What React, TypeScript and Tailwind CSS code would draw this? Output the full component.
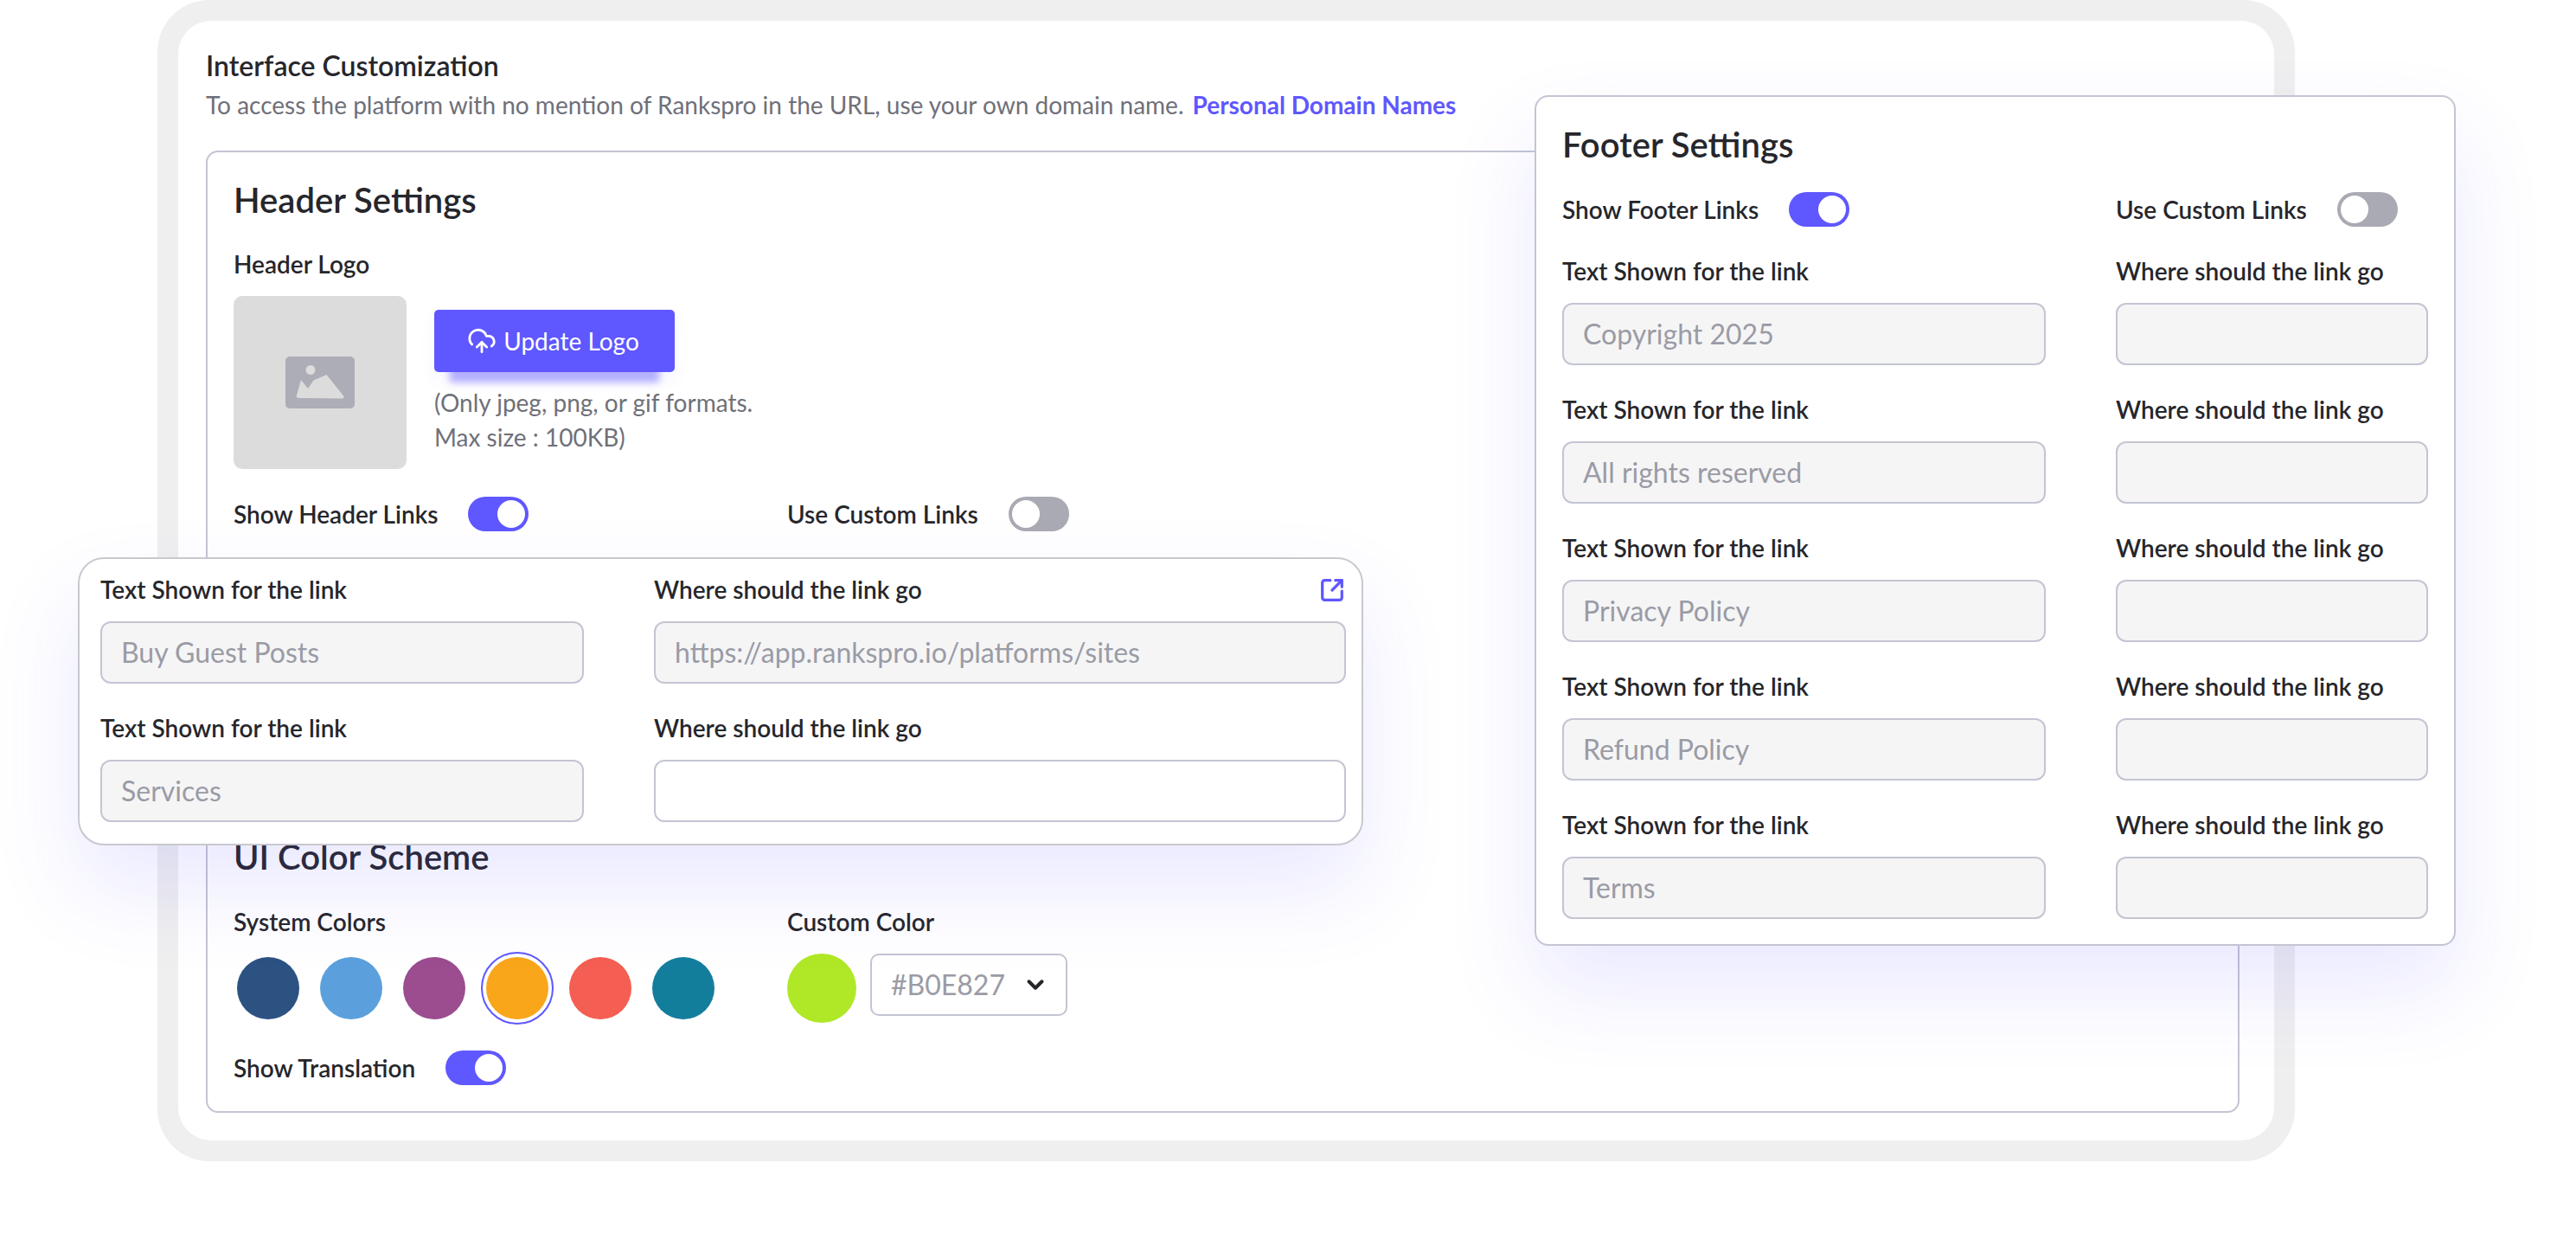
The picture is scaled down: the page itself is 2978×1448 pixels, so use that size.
import { CloudUpload, ChevronDown } from "lucide-react";

function Toggle({ on = true }: { on?: boolean }) {
  return (
    <div className={`flex h-[40px] w-[70px] shrink-0 items-center rounded-full p-[4px] ${on ? "justify-end bg-[#5f57ff]" : "justify-start bg-[#a9aab3]"}`}>
      <div className="h-[32px] w-[32px] rounded-full bg-white" />
    </div>
  );
}

function Label({ children }: { children: React.ReactNode }) {
  return <div className="h-[36px] whitespace-nowrap text-[28px] leading-[33px] font-semibold text-[#26262b]">{children}</div>;
}

function ToggleRow({ label, on }: { label: string; on?: boolean }) {
  return (
    <div className="flex h-[40px] items-center gap-[35px]">
      <div className="pt-[4px]">
        <Label>{label}</Label>
      </div>
      <Toggle on={on} />
    </div>
  );
}

function Field({ value = "", white = false }: { value?: string; white?: boolean }) {
  return (
    <div className={`flex h-[72px] items-center rounded-[12px] border-2 border-[#c3c5d3] px-[22px] text-[32px] text-[#9a9ba5] ${white ? "bg-white" : "bg-[#f5f5f6]"}`}>
      {value}
    </div>
  );
}

function LinkField({ label, value, white, extra }: { label: string; value?: string; white?: boolean; extra?: React.ReactNode }) {
  return (
    <div className="relative flex flex-col gap-[17px]">
      <Label>{label}</Label>
      <Field value={value} white={white} />
      {extra}
    </div>
  );
}

function ExternalIcon() {
  return (
    <svg className="absolute right-[2px] top-[3px]" width="28" height="28" viewBox="0 0 26 26" fill="none" stroke="#5f57ff" strokeWidth="3" strokeLinecap="round" strokeLinejoin="round">
      <path d="M11 2.5H5A2.5 2.5 0 0 0 2.5 5v16A2.5 2.5 0 0 0 5 23.5h16a2.5 2.5 0 0 0 2.5-2.5v-7" />
      <path d="M13 13 23.5 2.5" />
      <path d="M16.5 2.5h7v7" />
    </svg>
  );
}

function ImageIcon() {
  return (
    <svg width="80" height="60" viewBox="0 0 80 60">
      <rect width="80" height="60" rx="5" fill="#acadb6" />
      <circle cx="29" cy="15.5" r="5.5" fill="#dcdcdc" />
      <path d="M15 48a2.5 2.5 0 0 1-2-3.6L18 27l8 10 6.5-9.5 15-6.5 20 25a2 2 0 0 1-1.5 2.5Z" fill="#dcdcdc" />
    </svg>
  );
}

const system = ["bg-[#2c5282]", "bg-[#5ba0dc]", "bg-[#9b4d8f]", "bg-[#faa61a]", "bg-[#f55e52]", "bg-[#137e9c]"];
const footer = ["Copyright 2025", "All rights reserved", "Privacy Policy", "Refund Policy", "Terms"];

export default function App() {
  return (
    <div className="relative h-[1448px] w-[2978px] overflow-hidden bg-white font-['Lato','Liberation_Sans',sans-serif]">
      <div className="ml-[182px] h-[1342px] w-[2471px] rounded-[60px] bg-[#efefef] p-[24px]">
        <div className="h-full rounded-[38px] bg-white pl-[32px] pr-[40px] pt-[33px]">
          <div className="text-[32px] leading-[37px] font-semibold text-[#26262b]">Interface Customization</div>
          <div className="mt-[9px] flex gap-[10px] text-[28px] leading-[37px] text-[#6f7079]">
            <span>To access the platform with no mention of Rankspro in the URL, use your own domain name.</span>
            <span className="font-bold text-[#5f57ff]">Personal Domain Names</span>
          </div>

          <div className="mt-[34px] h-[1112px] rounded-[14px] border-2 border-[#c3c5d3] pl-[30px] pr-[31px] pt-[33px]">
            <div className="h-[48px] text-[40px] leading-[45px] font-semibold text-[#26262b]">Header Settings</div>
            <div className="mt-[32px]"><Label>Header Logo</Label></div>
            <div className="mt-[17px] flex gap-[32px]">
              <div className="flex h-[200px] w-[200px] items-center justify-center rounded-[10px] bg-[#dcdcdc]">
                <ImageIcon />
              </div>
              <div className="pt-[16px]">
                <button className="flex h-[72px] w-[278px] items-center justify-center gap-[8px] rounded-[5px] bg-[#5f57ff] pr-[3px] text-[28px] text-white shadow-[0_30px_8px_-18px_rgba(95,87,255,0.45),0_8px_20px_rgba(95,87,255,0.06)]">
                  <CloudUpload size={34} strokeWidth={2} />
                  Update Logo
                </button>
                <div className="mt-[15px] text-[28px] leading-[40px] text-[#6f7079]">
                  (Only jpeg, png, or gif formats.
                  <br />
                  Max size : 100KB)
                </div>
              </div>
            </div>
            <div className="mt-[32px] grid grid-cols-[640px_1fr] items-center">
              <ToggleRow label="Show Header Links" />
              <ToggleRow label="Use Custom Links" on={false} />
            </div>

            <div className="mt-[353px] h-[48px] text-[40px] leading-[47px] font-semibold text-[#26262b]">UI Color Scheme</div>
            <div className="mt-[34px] grid grid-cols-[640px_1fr]">
              <div>
                <Label>System Colors</Label>
                <div className="mt-[17px] flex h-[80px] items-center gap-[24px] pl-[4px]">
                  {system.map((c, i) => (
                    <div key={c} className={`h-[72px] w-[72px] rounded-full ${c} ${i === 3 ? "outline-2 outline-offset-[4px] outline-[#5f57ff]" : ""}`} />
                  ))}
                </div>
              </div>
              <div>
                <Label>Custom Color</Label>
                <div className="mt-[17px] flex h-[80px] gap-[16px]">
                  <div className="h-[80px] w-[80px] rounded-full bg-[#b0e827]" />
                  <div className="flex h-[72px] w-[228px] items-center justify-between rounded-[10px] border-2 border-[#c3c5d3] pl-[22px] pr-[20px] text-[32px] text-[#9a9ba5]">
                    #B0E827
                    <ChevronDown size={30} strokeWidth={3.2} className="text-[#26262b]" />
                  </div>
                </div>
              </div>
            </div>
            <div className="mt-[32px]"><ToggleRow label="Show Translation" /></div>
          </div>
        </div>
      </div>

      <div className="absolute left-[90px] top-[644px] w-[1486px] rounded-[30px] border-2 border-[#c8c8d0] bg-white pb-[25px] pl-[24px] pr-[18px] pt-[19px] shadow-[0_50px_100px_rgba(95,87,255,0.13)]">
        <div className="grid grid-cols-[559px_800px] gap-x-[81px] gap-y-[35px]">
          <LinkField label="Text Shown for the link" value="Buy Guest Posts" />
          <LinkField label="Where should the link go" value="https://app.rankspro.io/platforms/sites" extra={<ExternalIcon />} />
          <LinkField label="Text Shown for the link" value="Services" />
          <LinkField label="Where should the link go" white />
        </div>
      </div>

      <div className="absolute left-[1774px] top-[110px] w-[1065px] rounded-[16px] border-2 border-[#c3c5d3] bg-white pb-[29px] pl-[30px] pr-[30px] pt-[32px] shadow-[0_50px_100px_rgba(95,87,255,0.13)]">
        <div className="h-[48px] text-[40px] leading-[46px] font-semibold text-[#26262b]">Footer Settings</div>
        <div className="mt-[30px] grid grid-cols-[559px_361px] gap-x-[81px] gap-y-[35px]">
          <ToggleRow label="Show Footer Links" />
          <ToggleRow label="Use Custom Links" on={false} />
          {footer.map((f) => (
            <div key={f} className="col-span-2 grid grid-cols-[559px_361px] gap-x-[81px]">
              <LinkField label="Text Shown for the link" value={f} />
              <LinkField label="Where should the link go" />
            </div>
          ))}
        </div>
      </div>
    </div>
  );
}
